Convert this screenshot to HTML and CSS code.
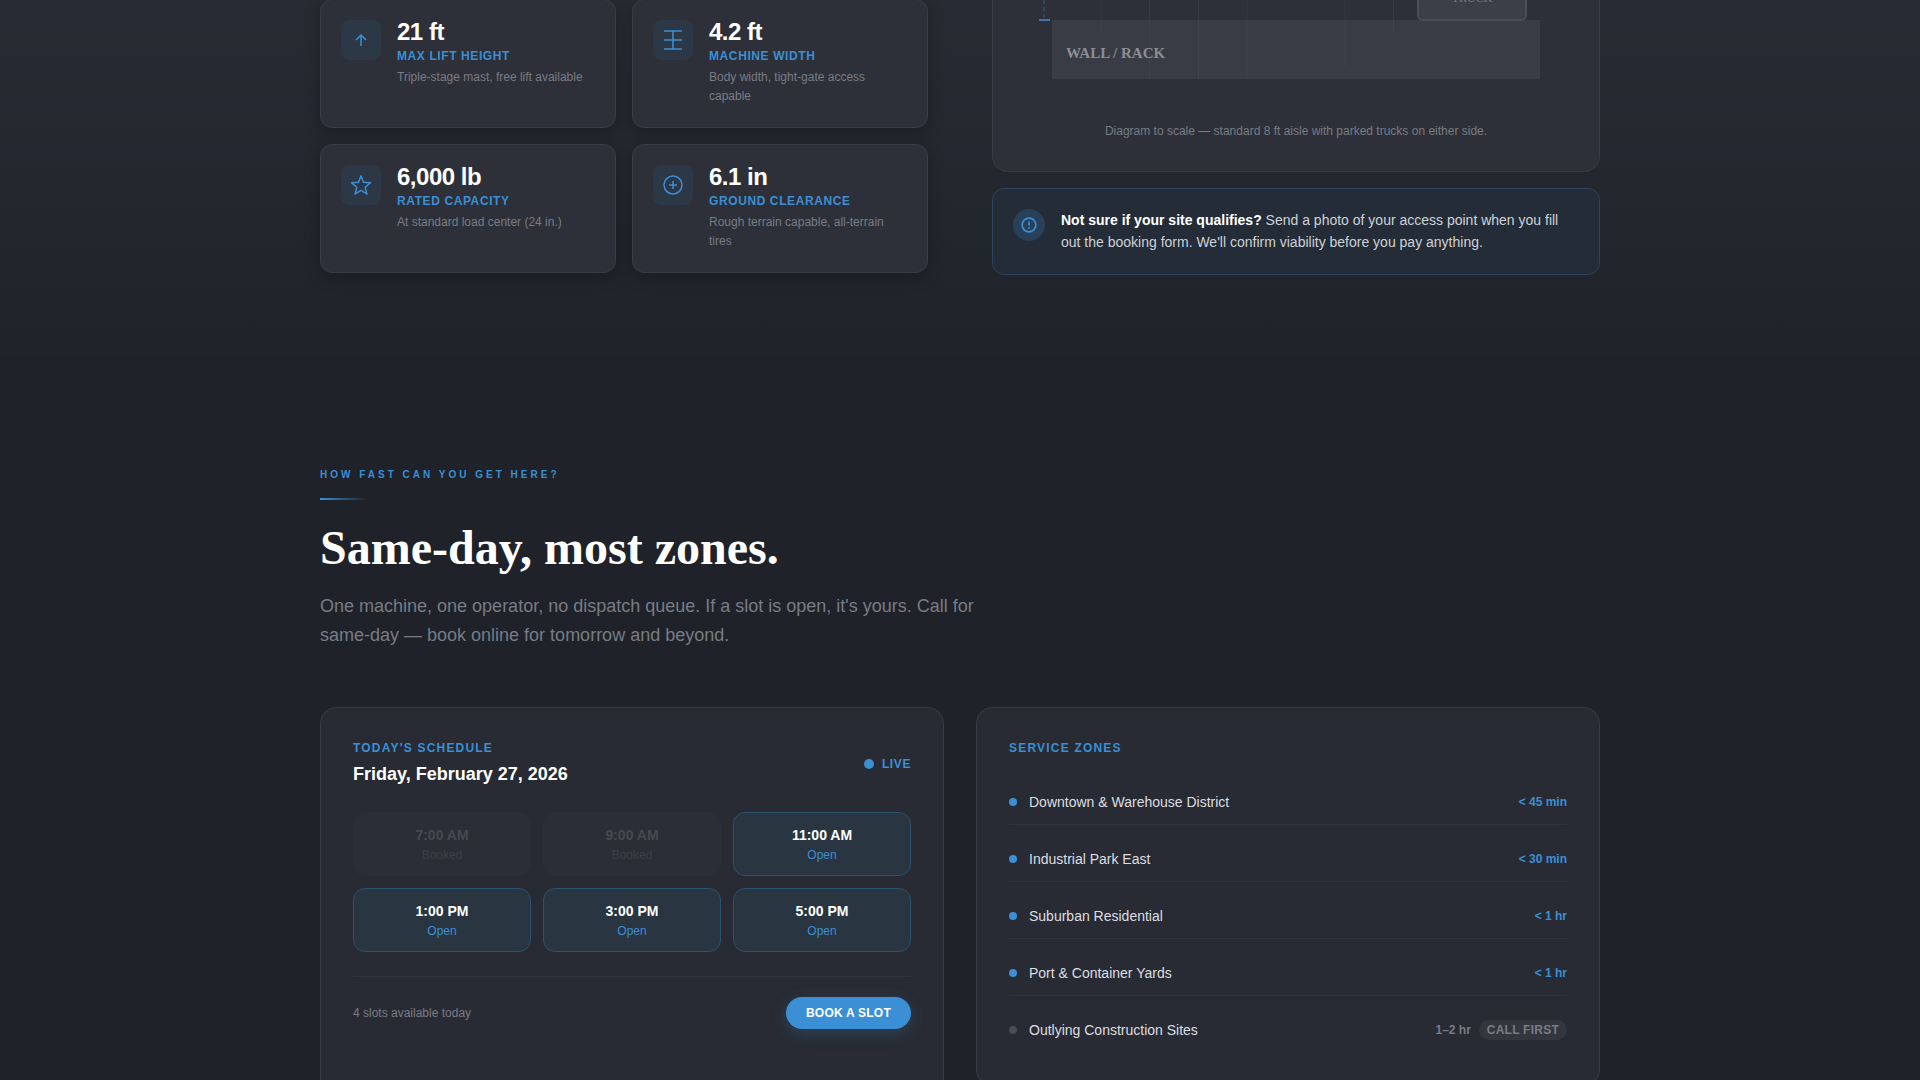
FILE: index.html
```html
<!DOCTYPE html>
<html lang="en">
<head>
<meta charset="utf-8">
<meta name="viewport" content="width=device-width, initial-scale=1">
<title>Forklift Service</title>
<link rel="stylesheet" href="styles.css">
</head>
<body>
<section class="specs">
  <div class="container specs-grid">
    <div class="stats">
      <article class="stat">
        <span class="stat-icon"><svg width="20" height="20" viewBox="0 0 20 20" fill="none"><path d="M10 16V5M5 10l5-5 5 5"/></svg></span>
        <div><h3 class="stat-value">21 ft</h3><p class="stat-label">Max Lift Height</p><p class="stat-desc">Triple-stage mast, free lift available</p></div>
      </article>
      <article class="stat">
        <span class="stat-icon"><svg width="20" height="20" viewBox="0 0 20 20" fill="none"><path d="M1 1h18M1 10h18M1 19h18M10 1v18"/></svg></span>
        <div><h3 class="stat-value">4.2 ft</h3><p class="stat-label">Machine Width</p><p class="stat-desc">Body width, tight-gate access capable</p></div>
      </article>
      <article class="stat">
        <span class="stat-icon"><svg width="20" height="20" viewBox="0 0 20 20" fill="none"><path d="M10 1l2.6 6.2 6.7.6-5.1 4.4 1.6 6.6-5.8-3.5-5.8 3.5 1.6-6.6L.7 7.800l6.700-.6z"/></svg></span>
        <div><h3 class="stat-value">6,000 lb</h3><p class="stat-label">Rated Capacity</p><p class="stat-desc">At standard load center (24 in.)</p></div>
      </article>
      <article class="stat">
        <span class="stat-icon"><svg width="20" height="20" viewBox="0 0 20 20" fill="none"><circle cx="10" cy="10" r="9"/><path d="M6 10h8M10 6v8"/></svg></span>
        <div><h3 class="stat-value">6.1 in</h3><p class="stat-label">Ground Clearance</p><p class="stat-desc">Rough terrain capable, all-terrain tires</p></div>
      </article>
    </div>
    <div class="access">
      <figure class="diagram">
        <svg class="plan" viewBox="0 0 542 82" role="img" aria-label="Aisle plan">
          <path class="plan-dim" d="M19 0V19" stroke-dasharray="4 3"/>
          <path class="plan-tick" d="M14 20h11"/>
          <rect class="plan-wall" x="27" y="20" width="488" height="59"/>
          <path class="plan-lines" d="M76 0V32M124.500 0V79M173.500 0V79M222 0V79M320 0V66M368.500 0V32"/>
          <rect class="plan-truck" x="393" y="-40" width="108" height="60" rx="5"/>
          <text class="plan-truck-label" x="447" y="2" text-anchor="middle">TRUCK</text>
          <text class="plan-wall-label" x="41" y="58">WALL / RACK</text>
        </svg>
        <figcaption>Diagram to scale — standard 8 ft aisle with parked trucks on either side.</figcaption>
      </figure>
      <aside class="note">
        <span class="note-icon"><svg width="16" height="16" viewBox="0 0 14 14" fill="none"><circle cx="7" cy="7" r="6"/><path d="M7 4v3.500M7 9v1.200"/></svg></span>
        <p><strong>Not sure if your site qualifies?</strong> Send a photo of your access point when you fill out the booking form. We'll confirm viability before you pay anything.</p>
      </aside>
    </div>
  </div>
</section>

<section class="availability">
  <div class="container">
    <p class="eyebrow">How fast can you get here?</p>
    <h2>Same-day, most zones.</h2>
    <p class="lead">One machine, one operator, no dispatch queue. If a slot is open, it's yours. Call for same-day — book online for tomorrow and beyond.</p>
    <div class="panels">
      <article class="panel schedule">
        <header class="panel-head">
          <div><p class="panel-label">Today's Schedule</p><h3 class="panel-date">Friday, February 27, 2026</h3></div>
          <span class="live">Live</span>
        </header>
        <div class="slots">
          <button class="slot" disabled>7:00 AM<span>Booked</span></button>
          <button class="slot" disabled>9:00 AM<span>Booked</span></button>
          <button class="slot">11:00 AM<span>Open</span></button>
          <button class="slot">1:00 PM<span>Open</span></button>
          <button class="slot">3:00 PM<span>Open</span></button>
          <button class="slot">5:00 PM<span>Open</span></button>
        </div>
        <footer class="panel-foot"><p>4 slots available today</p><a class="book" href="#book">Book a Slot</a></footer>
      </article>
      <article class="panel">
        <p class="panel-label">Service Zones</p>
        <ul class="zones">
          <li><span class="zone">Downtown &amp; Warehouse District</span><span class="eta">&lt; 45 min</span></li>
          <li><span class="zone">Industrial Park East</span><span class="eta">&lt; 30 min</span></li>
          <li><span class="zone">Suburban Residential</span><span class="eta">&lt; 1 hr</span></li>
          <li><span class="zone">Port &amp; Container Yards</span><span class="eta">&lt; 1 hr</span></li>
          <li class="far"><span class="zone">Outlying Construction Sites</span><span class="eta">1–2 hr<span class="tag">Call First</span></span></li>
        </ul>
      </article>
    </div>
  </div>
</section>
</body>
</html>
```
FILE: styles.css
```css
:root {
  --bg: #1f2229;
  --blue: #3b8fd5;
  --muted: #787c85;
  --line: #383c45;
}
* { box-sizing: border-box; }
html { overflow: hidden; }
body {
  margin: 0;
  background: var(--bg);
  color: #fff;
  font: 14px/22px "Liberation Sans", Arial, sans-serif;
}
h2, h3, p, ul, figure { margin: 0; padding: 0; }
.container { max-width: 1280px; margin: 0 auto; }

.specs {
  background: linear-gradient(#282b33, #1f232a);
  padding-bottom: 80px;
}
.specs-grid { display: grid; grid-template-columns: 1fr 1fr; gap: 64px; align-items: start; }
.stats { display: grid; grid-template-columns: 1fr 1fr; gap: 16px; margin-top: -1px; }
.stat {
  display: flex;
  gap: 16px;
  min-height: 129px;
  padding: 20px;
  background: #2d3038;
  border: 1px solid var(--line);
  border-radius: 12px;
  box-shadow: 0 4px 16px rgba(0, 0, 0, .25);
}
.stat-icon {
  display: grid;
  flex: none;
  place-items: center;
  width: 40px;
  height: 40px;
  border-radius: 8px;
  background: #2c3845;
}
.stat-icon svg, .note-icon svg { stroke: var(--blue); stroke-width: 1.5; }
.stat-value { font-size: 24px; line-height: 24px; letter-spacing: -0.02em; }
.stat-label {
  margin-top: 4px;
  color: var(--blue);
  font-size: 12px;
  font-weight: bold;
  line-height: 16px;
  letter-spacing: 0.05em;
  text-transform: uppercase;
}
.stat-desc { margin-top: 4px; color: var(--muted); font-size: 12px; line-height: 19px; }

.access { display: grid; gap: 16px; }
.diagram {
  padding: 0 32px 30px;
  background: #2d3038;
  border: 1px solid var(--line);
  border-top: 0;
  border-radius: 0 0 16px 16px;
}
.plan { display: block; width: 100%; height: auto; }
.plan-lines { stroke: #fff; stroke-opacity: .04; }
.plan-dim { stroke: #30607f; }
.plan-tick { stroke: #4775a5; stroke-width: 2; }
.plan-wall { fill: #393c44; }
.plan-truck { fill: #3c3f47; stroke: #4b4e56; stroke-width: 2; }
.plan text { font-family: "Liberation Serif", serif; }
.plan-truck-label { fill: #777a81; font-size: 12px; }
.plan-wall-label { fill: #8b8e95; font-size: 15px; font-weight: bold; }
.diagram figcaption {
  margin-top: 40px;
  color: var(--muted);
  font-size: 12px;
  line-height: 19px;
  text-align: center;
}
.note {
  display: flex;
  gap: 16px;
  min-height: 87px;
  padding: 20px;
  background: #232c37;
  border: 1px solid #29465c;
  border-radius: 12px;
}
.note-icon {
  display: grid;
  flex: none;
  place-items: center;
  width: 32px;
  height: 32px;
  border-radius: 50%;
  background: #284059;
}
.note p { color: #cfd2d7; }
.note strong { color: #fff; }

.availability { padding: 111px 0 80px; }
.eyebrow {
  color: var(--blue);
  font-size: 10px;
  font-weight: bold;
  line-height: 18px;
  letter-spacing: 0.3em;
  text-transform: uppercase;
}
.eyebrow::after {
  content: "";
  display: block;
  width: 48px;
  height: 2px;
  margin-top: 14px;
  background: linear-gradient(90deg, var(--blue), transparent);
}
h2 {
  margin-top: 20px;
  font: bold 48px/56px "Liberation Serif", "Times New Roman", serif;
}
.lead { max-width: 672px; margin-top: 16px; color: var(--muted); font-size: 18px; line-height: 29px; }
.panels { display: grid; grid-template-columns: 1fr 1fr; gap: 32px; align-items: start; margin-top: 57px; }
.panel {
  padding: 32px;
  background: #282b33;
  border: 1px solid var(--line);
  border-radius: 16px;
}
.schedule { min-height: 400px; }
.panel-label {
  color: var(--blue);
  font-size: 12px;
  font-weight: bold;
  line-height: 16px;
  letter-spacing: 0.1em;
  text-transform: uppercase;
}
.panel-head { display: flex; justify-content: space-between; align-items: center; }
.panel-date { margin-top: 4px; font-size: 18px; line-height: 28px; }
.live {
  display: flex;
  align-items: center;
  gap: 8px;
  color: var(--blue);
  font-size: 12px;
  font-weight: bold;
  letter-spacing: 0.05em;
  text-transform: uppercase;
}
.live::before { content: ""; width: 10px; height: 10px; border-radius: 50%; background: var(--blue); }
.slots { display: grid; grid-template-columns: repeat(3, 1fr); gap: 12px; margin-top: 24px; }
.slot {
  height: 64px;
  padding: 2px 0 0;
  background: #293541;
  border: 1px solid #2b526f;
  border-radius: 12px;
  color: #fff;
  font: bold 14px/20px "Liberation Sans", Arial, sans-serif;
}
.slot span { display: block; color: var(--blue); font-size: 12px; font-weight: normal; }
.slot:disabled { background: #2b2e36; border-color: #2b2e36; color: #464950; }
.slot:disabled span { color: #3c3f47; }
.panel-foot {
  display: flex;
  align-items: center;
  justify-content: space-between;
  margin-top: 24px;
  padding-top: 20px;
  border-top: 1px solid #31353d;
  color: var(--muted);
  font-size: 12px;
}
.book {
  padding: 8px 20px;
  border-radius: 16px;
  background: var(--blue);
  box-shadow: 0 4px 16px rgba(59, 143, 213, .25);
  color: #fff;
  font-weight: bold;
  line-height: 16px;
  letter-spacing: 0.02em;
  text-decoration: none;
  text-transform: uppercase;
}
.zones { display: grid; gap: 12px; margin-top: 24px; list-style: none; }
.zones li {
  display: flex;
  align-items: center;
  justify-content: space-between;
  height: 45px;
  border-bottom: 1px solid #31353d;
}
.zones li:last-child { border-color: transparent; }
.zone { display: flex; align-items: center; gap: 12px; color: #dcdee2; }
.zone::before { content: ""; width: 8px; height: 8px; border-radius: 50%; background: var(--blue); }
.eta { display: flex; align-items: center; gap: 8px; color: var(--blue); font-size: 12px; font-weight: bold; }
.tag {
  padding: 2px 8px;
  border-radius: 10px;
  background: #33363d;
  line-height: 16px;
  letter-spacing: 0.02em;
  text-transform: uppercase;
}
.far .eta { color: var(--muted); }
.far .zone::before { background: #4a4d55; }
```
